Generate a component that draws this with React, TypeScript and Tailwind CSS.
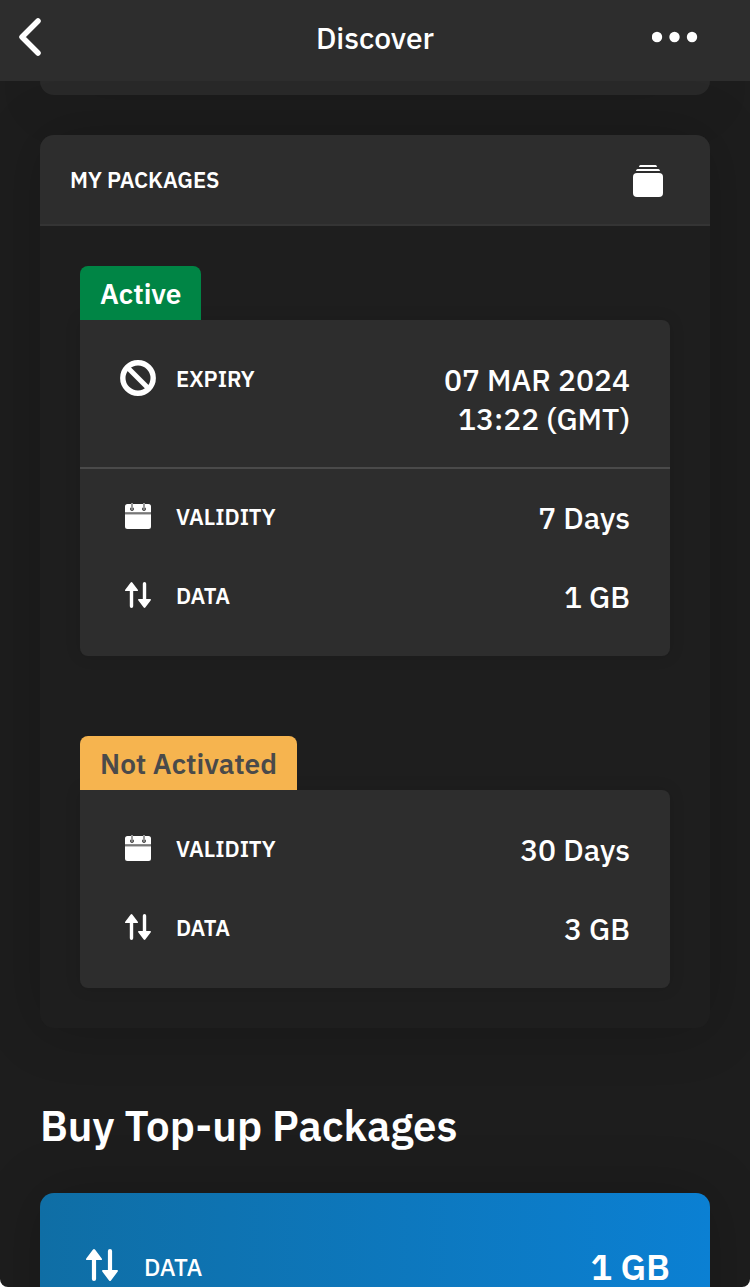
import type { ReactNode } from "react";

type IconProps = { className?: string };

const BackIcon = () => (
  <svg width="28" height="44" viewBox="0 0 28 44" fill="none" aria-hidden="true">
    <path d="M22 6 6 22l16 16" stroke="#fff" strokeWidth="5.5" strokeLinecap="round" strokeLinejoin="round" />
  </svg>
);

const MoreIcon = () => (
  <svg width="46" height="12" viewBox="0 0 46 12" fill="#fff" aria-hidden="true">
    <circle cx="5" cy="6" r="5.2" />
    <circle cx="22.5" cy="6" r="5.2" />
    <circle cx="40" cy="6" r="5.2" />
  </svg>
);

const PackagesIcon = () => (
  <svg width="30" height="32" viewBox="0 0 30 32" fill="#fff" aria-hidden="true">
    <path d="M7.4 0h15.2q1 0 1.5 2H5.9q.5-2 1.5-2Z" />
    <path d="M4.6 4h20.8q1.1 0 1.7 2H2.9q.6-2 1.7-2Z" />
    <rect y="8" width="30" height="24" rx="4" />
  </svg>
);

const ExpiryIcon = () => (
  <svg width="36" height="36" viewBox="0 0 36 36" fill="none" stroke="#fff" aria-hidden="true">
    <circle cx="18" cy="18" r="15.2" strokeWidth="5.4" />
    <path d="m7.5 7.5 21 21" strokeWidth="5" />
  </svg>
);

const CalendarIcon = () => (
  <svg width="26" height="26" viewBox="0 0 26 26" aria-hidden="true">
    <path d="M2.5 1h21A2.5 2.5 0 0 1 26 3.5V9.6H0V3.5A2.5 2.5 0 0 1 2.5 1Z" fill="#fff" />
    <path d="M0 11.2h26v12.3a2.5 2.5 0 0 1-2.5 2.5h-21A2.5 2.5 0 0 1 0 23.5Z" fill="#fff" />
    <path d="M0 10.4h26" stroke="#777" strokeWidth="1.4" />
    <g stroke="#555" fill="#888">
      <circle cx="7" cy="6" r="1.6" />
      <circle cx="19" cy="6" r="1.6" />
    </g>
    <path d="M7 0v5M19 0v5" stroke="#999" strokeWidth="2" />
  </svg>
);

const DataIcon = ({ className }: IconProps) => (
  <svg className={className} viewBox="0 0 26 26" fill="#fff" aria-hidden="true">
    <path d="M5.7.5q.8-.9 1.6 0l5.5 7.3q.6 1.2-.7 1.2H8.2v15.3q0 1.7-1.7 1.7t-1.7-1.7V9H.9q-1.300 0-.7-1.2Z" />
    <path d="M18.7 25.5q.8.900 1.6 0l5.5-7.3q.6-1.2-.7-1.2h-3.9V1.7Q21.2 0 19.5 0t-1.7 1.700V17h-3.900q-1.300 0-.7 1.2Z" />
  </svg>
);

type RowProps = { icon: ReactNode; label: string; children: ReactNode };

const InfoRow = ({ icon, label, children }: RowProps) => (
  <div className="flex items-start justify-between">
    <dt className="flex items-start gap-5 text-[22px] leading-[38px] font-semibold">
      <span className="flex size-9 items-center justify-center">{icon}</span>
      {label}
    </dt>
    <dd className="text-right text-[30px] leading-[39px] font-medium">{children}</dd>
  </div>
);

type Package = {
  status: string;
  active: boolean;
  expiry?: string[];
  validity: string;
  data: string;
};

const packages: Package[] = [
  {
    status: "Active",
    active: true,
    expiry: ["07 MAR 2024", "13:22 (GMT)"],
    validity: "7 Days",
    data: "1 GB",
  },
  { status: "Not Activated", active: false, validity: "30 Days", data: "3 GB" },
];

const PackageCard = ({ item }: { item: Package }) => (
  <article>
    <h3
      className={
        item.active
          ? "relative z-10 w-fit rounded-t-lg bg-[#008545] px-5 pt-0.5 text-[28px] leading-[52px] font-semibold text-white"
          : "relative z-10 w-fit rounded-t-lg bg-[#f6b44f] px-5 pt-0.5 text-[28px] leading-[52px] font-semibold text-[#4a4a4a]"
      }
    >
      {item.status}
    </h3>
    <dl className="rounded-lg rounded-tl-none bg-[#2d2d2d] shadow-[0_0_16px_rgba(0,0,0,0.12)]">
      {item.expiry && (
        <div className="border-b-2 border-[#4a4a4a] px-10 pt-10 pb-[29px]">
          <InfoRow icon={<ExpiryIcon />} label="EXPIRY">
            {item.expiry[0]}
            <br />
            {item.expiry[1]}
          </InfoRow>
        </div>
      )}
      <div className={item.expiry ? "space-y-10 px-10 pt-[29px] pb-10" : "space-y-10 p-10"}>
        <InfoRow icon={<CalendarIcon />} label="VALIDITY">
          {item.validity}
        </InfoRow>
        <InfoRow icon={<DataIcon className="size-[26px]" />} label="DATA">
          {item.data}
        </InfoRow>
      </div>
    </dl>
  </article>
);

const App = () => {
  return (
    <div className="h-screen bg-white">
      <div className="flex h-full flex-col overflow-hidden rounded-b-lg bg-[#1d1d1d] font-['IBM_Plex_Sans','Noto_Sans',sans-serif] text-white">
        <header className="relative z-10 grid h-[81px] shrink-0 grid-cols-3 items-start bg-[#2d2d2d] px-4 pt-[15px]">
          <button type="button" aria-label="Back" className="justify-self-start">
            <BackIcon />
          </button>
          <h1 className="text-center text-[30px] leading-[46px] font-medium">Discover</h1>
          <button type="button" aria-label="More" className="flex h-11 items-center justify-self-end pr-9">
            <MoreIcon />
          </button>
        </header>

        <main className="min-h-0 flex-1 overflow-y-auto px-10 [scrollbar-width:none]">
          {/* Tail of the card scrolled under the header */}
          <div className="h-[14px] rounded-b-[14px] bg-[#292929] shadow-[0_0_60px_rgba(0,0,0,0.2)]" />

          <section className="mt-10 rounded-[14px] bg-[#1e1e1e] shadow-[0_0_60px_rgba(0,0,0,0.2)]">
            <div className="flex items-start justify-between rounded-t-[14px] border-b-2 border-[#343434] bg-[#2d2d2d] pt-[30px] pr-[47px] pb-[27px] pl-[30px]">
              <h2 className="text-[22px] leading-[30px] font-semibold">MY PACKAGES</h2>
              <PackagesIcon />
            </div>
            <div className="space-y-20 p-10">
              {packages.map((item) => (
                <PackageCard key={item.status} item={item} />
              ))}
            </div>
          </section>

          <h2 className="mt-[71px] text-[42px] leading-[54px] font-semibold">Buy Top-up Packages</h2>

          <a
            href="#top-up"
            className="mt-10 block rounded-[14px] bg-linear-to-r from-[#0f6ea5] to-[#0b80d3] px-10 py-[50px] shadow-[0_0_60px_rgba(0,0,0,0.2)]"
          >
            <div className="flex items-start justify-between">
              <span className="flex items-start gap-5 text-[24px] leading-[49px] font-medium">
                <span className="flex size-11 items-center justify-center">
                  <DataIcon className="size-8" />
                </span>
                DATA
              </span>
              <span className="text-[36px] leading-[47px] font-semibold">1 GB</span>
            </div>
          </a>
        </main>
      </div>
    </div>
  );
};

export default App;
